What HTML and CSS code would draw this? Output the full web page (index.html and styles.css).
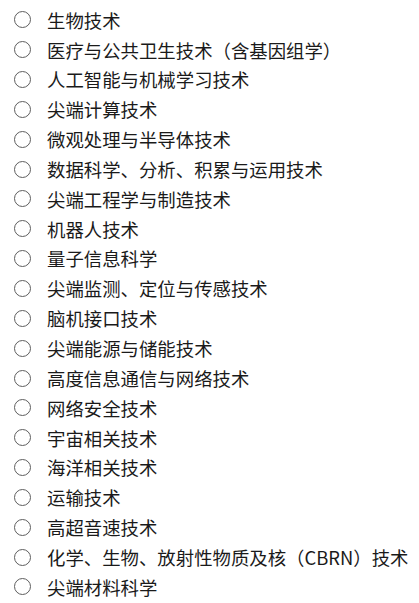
FILE: index.html
```html
<!DOCTYPE html>
<html lang="zh">
  <head>
    <meta charset="UTF-8" />
    <title>技术领域</title>
    <link rel="stylesheet" href="styles.css">
  </head>
  <body>
    <ul class="options">
      <li><span class="radio"></span><span class="label">生物技术</span></li>
      <li><span class="radio"></span><span class="label">医疗与公共卫生技术（含基因组学）</span></li>
      <li><span class="radio"></span><span class="label">人工智能与机械学习技术</span></li>
      <li><span class="radio"></span><span class="label">尖端计算技术</span></li>
      <li><span class="radio"></span><span class="label">微观处理与半导体技术</span></li>
      <li><span class="radio"></span><span class="label">数据科学、分析、积累与运用技术</span></li>
      <li><span class="radio"></span><span class="label">尖端工程学与制造技术</span></li>
      <li><span class="radio"></span><span class="label">机器人技术</span></li>
      <li><span class="radio"></span><span class="label">量子信息科学</span></li>
      <li><span class="radio"></span><span class="label">尖端监测、定位与传感技术</span></li>
      <li><span class="radio"></span><span class="label">脑机接口技术</span></li>
      <li><span class="radio"></span><span class="label">尖端能源与储能技术</span></li>
      <li><span class="radio"></span><span class="label">高度信息通信与网络技术</span></li>
      <li><span class="radio"></span><span class="label">网络安全技术</span></li>
      <li><span class="radio"></span><span class="label">宇宙相关技术</span></li>
      <li><span class="radio"></span><span class="label">海洋相关技术</span></li>
      <li><span class="radio"></span><span class="label">运输技术</span></li>
      <li><span class="radio"></span><span class="label">高超音速技术</span></li>
      <li><span class="radio"></span><span class="label">化学、生物、放射性物质及核（CBRN）技术</span></li>
      <li><span class="radio"></span><span class="label">尖端材料科学</span></li>
    </ul>
  </body>
</html>
```

FILE: styles.css
```css
*{
    margin: 0;
    padding: 0;
    box-sizing: border-box;
}
body{
    background: #fff;
    font-family: "Noto Sans CJK SC", "Noto Sans", sans-serif;
    color: #1a1a1a;
}
.options{
    list-style: none;
    padding-top: 5px;
}
.options li{
    display: flex;
    align-items: center;
    height: 29.85px;
    white-space: nowrap;
}
.radio{
    width: 17px;
    height: 17px;
    border: 1.2px solid #5e5e5e;
    border-radius: 50%;
    margin-left: 14px;
    margin-right: 16px;
    flex-shrink: 0;
}
.label{
    font-size: 18.4px;
    line-height: 1;
}
```
